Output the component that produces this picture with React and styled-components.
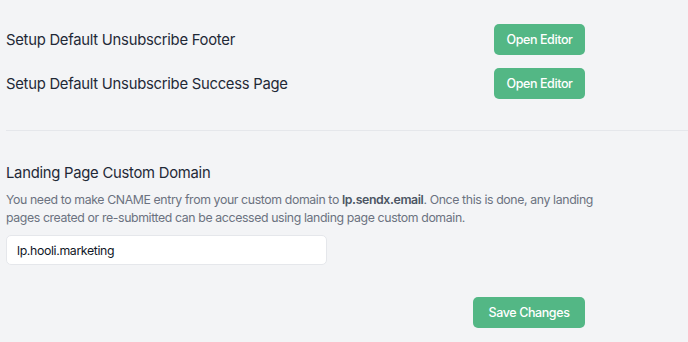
import styled, { createGlobalStyle } from 'styled-components';

const GlobalStyle = createGlobalStyle`
  body {
    margin: 0;
    background: #f3f4f6;
    font-family: Inter, "Noto Sans", sans-serif;
  }
`;

const Page = styled.div`
  padding-top: 24px;
  min-height: 342px;
  box-sizing: border-box;
`;

const Section = styled.div`
  width: 579px;
  margin-left: 6px;
`;

const SettingRow = styled.div`
  display: flex;
  align-items: center;
  justify-content: space-between;
  height: 31px;

  & + & {
    margin-top: 13px;
  }
`;

const RowLabel = styled.span`
  font-size: 14.8px;
  letter-spacing: -0.25px;
  color: #1f2937;
`;

const GreenButton = styled.button`
  height: 31px;
  padding: 0 ${(p) => (p.$wide ? '15.5px' : '12.5px')};
  border: none;
  border-radius: 5px;
  background: #53b785;
  color: #fff;
  font-family: Inter, sans-serif;
  font-size: 12.5px;
  letter-spacing: -0.4px;
  font-weight: 500;
  cursor: pointer;
`;

const Divider = styled.hr`
  margin: 31px 0 0 6px;
  border: none;
  border-top: 1px solid #e5e7eb;
`;

const Heading = styled.h3`
  margin: 30px 0 0;
  font-size: 14.8px;
  letter-spacing: -0.25px;
  font-weight: 400;
  line-height: 24px;
  color: #1f2937;
`;

const Description = styled.p`
  margin: 6px 0 0;
  font-size: 12.3px;
  letter-spacing: -0.38px;
  line-height: 18px;
  color: #6b7280;
  white-space: nowrap;

  b {
    color: #4b5563;
    font-weight: 600;
  }
`;

const DomainInput = styled.input`
  display: block;
  margin-top: 8px;
  width: 321px;
  height: 30px;
  box-sizing: border-box;
  padding: 0 10px;
  border: 1px solid #e5e7eb;
  border-radius: 5px;
  background: #fff;
  font-family: Inter, sans-serif;
  font-size: 12.3px;
  letter-spacing: -0.35px;
  color: #111827;
  outline: none;
`;

const Footer = styled.div`
  display: flex;
  justify-content: flex-end;
  margin-top: 32px;
`;

export default function App() {
  return (
    <>
      <GlobalStyle />
      <Page>
        <Section>
          <SettingRow>
            <RowLabel>Setup Default Unsubscribe Footer</RowLabel>
            <GreenButton>Open Editor</GreenButton>
          </SettingRow>
          <SettingRow>
            <RowLabel>Setup Default Unsubscribe Success Page</RowLabel>
            <GreenButton>Open Editor</GreenButton>
          </SettingRow>
        </Section>
        <Divider />
        <Section>
          <Heading>Landing Page Custom Domain</Heading>
          <Description>
            You need to make CNAME entry from your custom domain to <b>lp.sendx.email</b>. Once this is done, any landing
            <br />
            pages created or re-submitted can be accessed using landing page custom domain.
          </Description>
          <DomainInput defaultValue="lp.hooli.marketing" />
          <Footer>
            <GreenButton $wide>Save Changes</GreenButton>
          </Footer>
        </Section>
      </Page>
    </>
  );
}
